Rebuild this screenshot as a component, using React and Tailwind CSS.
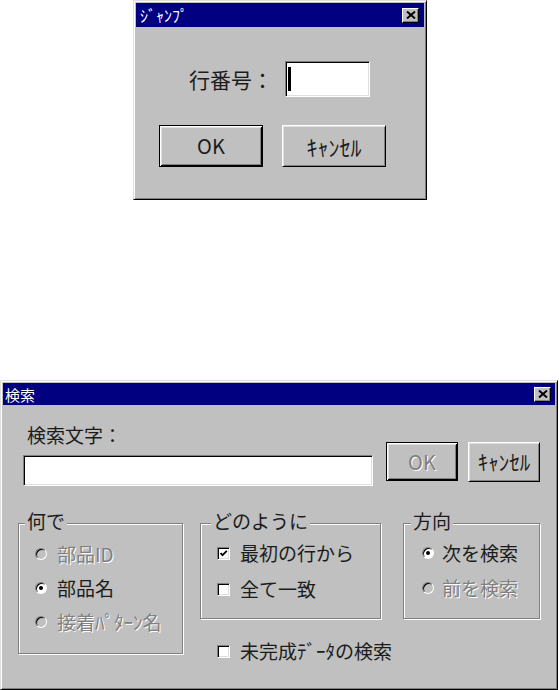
import React from "react";

const RAISED =
  "border border-t-[#dfdfdf] border-l-[#dfdfdf] border-r-black border-b-black shadow-[inset_1px_1px_#fff,inset_-1px_-1px_#808080]";
const BTN =
  "flex items-center justify-center bg-[#c0c0c0] border border-t-white border-l-white border-r-black border-b-black shadow-[inset_1px_1px_#dfdfdf,inset_-1px_-1px_#808080]";
const BTN_DEFAULT =
  "flex items-center justify-center bg-[#c0c0c0] border border-black shadow-[inset_1px_1px_#fff,inset_-1px_-1px_#000,inset_2px_2px_#dfdfdf,inset_-2px_-2px_#808080]";
const SUNKEN =
  "bg-white border border-t-[#808080] border-l-[#808080] border-r-white border-b-white shadow-[inset_1px_1px_#000,inset_-1px_-1px_#dfdfdf]";
const DISABLED = "text-[#808080] [text-shadow:1px_1px_0_#fff]";

function CloseBox() {
  return (
    <div className="w-[17px] h-[15px] bg-[#c0c0c0] border border-t-white border-l-white border-r-black border-b-black shadow-[inset_-1px_-1px_#808080] flex items-center justify-center">
      <svg width="10" height="8" viewBox="0 0 10 8">
        <path d="M1 0.5 L9 7.5 M9 0.5 L1 7.5" stroke="#000" strokeWidth="2" />
      </svg>
    </div>
  );
}

function Radio({ checked, disabled }) {
  return (
    <span
      className={`w-[12px] h-[12px] shrink-0 rounded-full border border-t-[#808080] border-l-[#808080] border-r-white border-b-white shadow-[inset_1px_1px_#000] flex items-center justify-center ${
        disabled ? "bg-[#c0c0c0]" : "bg-white"
      }`}
    >
      {checked && <span className="w-[4px] h-[4px] rounded-full bg-black" />}
    </span>
  );
}

function Check({ checked }) {
  return (
    <span className={`w-[13px] h-[13px] shrink-0 flex items-center justify-center ${SUNKEN}`}>
      {checked && (
        <svg width="9" height="9" viewBox="0 0 9 9">
          <polyline points="1.5,4 3.5,6.2 7.8,1.8" fill="none" stroke="#000" strokeWidth="1.8" />
        </svg>
      )}
    </span>
  );
}

function Group({ label, labelLeft, className, children }) {
  return (
    <div
      className={`relative border border-[#808080] shadow-[inset_1px_1px_#fff,1px_1px_#fff] ${className}`}
    >
      <span
        className={`absolute -top-[14px] ${labelLeft} bg-[#c0c0c0] px-[2px] text-[19px] leading-[22px]`}
      >
        {label}
      </span>
      {children}
    </div>
  );
}

export default function App() {
  return (
    <div className="w-[559px] h-[690px] overflow-hidden bg-white text-[#1c1c1c] font-['Noto_Sans_CJK_JP',sans-serif]">
      {/* ジャンプ dialog */}
      <div className={`ml-[133px] w-[294px] h-[200px] bg-[#c0c0c0] p-[2px] flex flex-col ${RAISED}`}>
        <div className="h-[24px] bg-[#000080] flex items-center justify-between pl-[4px] pr-[5px]">
          <span className="text-white text-[16px] leading-none">ｼﾞｬﾝﾌﾟ</span>
          <CloseBox />
        </div>
        <div className="mt-[34px] flex items-center pl-[53px]">
          <span className="w-[96px] text-[21px] leading-none">行番号：</span>
          <div className={`w-[85px] h-[36px] flex items-center ${SUNKEN}`}>
            <span className="ml-[2px] w-[3px] h-[24px] bg-black" />
          </div>
        </div>
        <div className="mt-[28px] flex gap-[19px] pl-[23px]">
          <button className={`w-[104px] h-[42px] text-[20px] ${BTN_DEFAULT}`}>OK</button>
          <button className={`w-[104px] h-[42px] text-[22px] ${BTN}`}>ｷｬﾝｾﾙ</button>
        </div>
      </div>

      {/* 検索 dialog */}
      <div className={`mt-[180px] w-[558px] h-[310px] bg-[#c0c0c0] p-[2px] flex flex-col ${RAISED}`}>
        <div className="h-[22px] bg-[#000080] flex items-center justify-between pl-[2px] pr-[4px]">
          <span className="text-white text-[15px] leading-none">検索</span>
          <CloseBox />
        </div>

        <div className="mt-[19px] flex items-end pl-[20px]">
          <div className="flex flex-col">
            <span className="pl-[4px] text-[19px] leading-[22px]">検索文字：</span>
            <div className={`mt-[9px] w-[350px] h-[31px] ${SUNKEN}`} />
          </div>
          <button className={`ml-[13px] mb-[5px] w-[72px] h-[39px] text-[20px] ${BTN_DEFAULT} ${DISABLED}`}>
            OK
          </button>
          <button className={`ml-[10px] mb-[4px] w-[72px] h-[40px] text-[21px] ${BTN}`}>ｷｬﾝｾﾙ</button>
        </div>

        <div className="mt-[37px] flex items-start pl-[15px]">
          <Group label="何で" labelLeft="left-[6px]" className="w-[165px] h-[131px] pt-[13px]">
            <div className="h-[34px] flex items-center gap-[10px] pl-[16px]">
              <Radio disabled />
              <span className={`text-[19px] leading-[22px] ${DISABLED}`}>部品ID</span>
            </div>
            <div className="h-[34px] flex items-center gap-[10px] pl-[16px]">
              <Radio checked />
              <span className="text-[19px] leading-[22px]">部品名</span>
            </div>
            <div className="h-[34px] flex items-center gap-[10px] pl-[16px]">
              <Radio disabled />
              <span className={`text-[19px] leading-[22px] ${DISABLED}`}>接着ﾊﾟﾀｰﾝ名</span>
            </div>
          </Group>

          <div className="ml-[17px] flex flex-col">
            <div className="flex items-start">
              <Group label="どのように" labelLeft="left-[10px]" className="w-[181px] h-[96px] pt-[11px]">
                <div className="h-[36px] flex items-center gap-[10px] pl-[16px]">
                  <Check checked />
                  <span className="text-[19px] leading-[22px]">最初の行から</span>
                </div>
                <div className="h-[36px] flex items-center gap-[10px] pl-[16px]">
                  <Check />
                  <span className="text-[19px] leading-[22px]">全て一致</span>
                </div>
              </Group>
              <Group label="方向" labelLeft="left-[7px]" className="ml-[22px] w-[137px] h-[96px] pt-[11px]">
                <div className="h-[36px] flex items-center gap-[8px] pl-[18px]">
                  <Radio checked />
                  <span className="text-[19px] leading-[22px]">次を検索</span>
                </div>
                <div className="h-[34px] flex items-center gap-[8px] pl-[18px]">
                  <Radio disabled />
                  <span className={`text-[19px] leading-[22px] ${DISABLED}`}>前を検索</span>
                </div>
              </Group>
            </div>
            <div className="mt-[22px] h-[20px] flex items-center gap-[10px] pl-[17px]">
              <Check />
              <span className="text-[19px] leading-[22px]">未完成ﾃﾞｰﾀの検索</span>
            </div>
          </div>
        </div>
      </div>
    </div>
  );
}
